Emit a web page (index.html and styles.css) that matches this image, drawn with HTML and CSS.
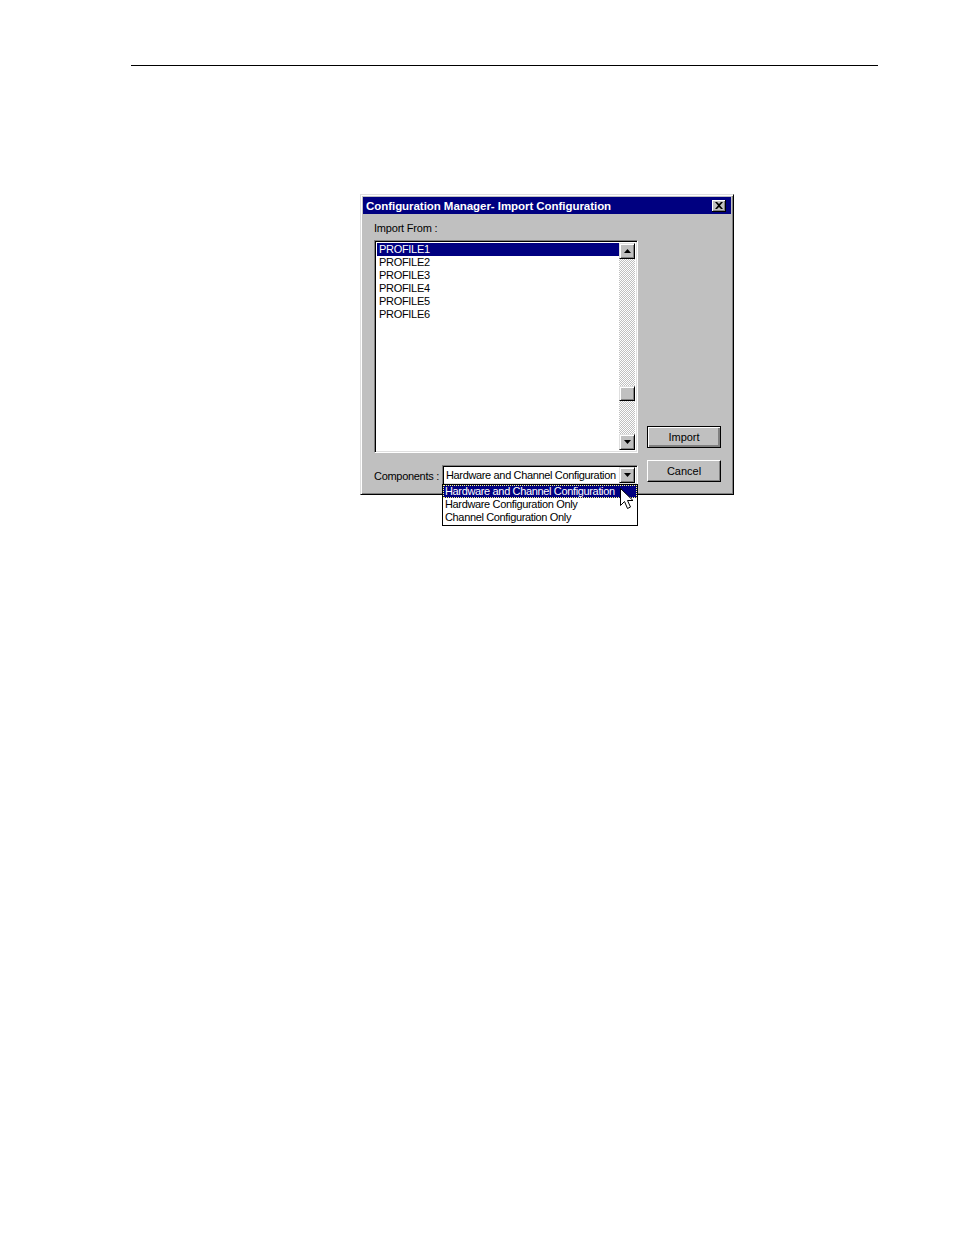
FILE: index.html
```html
<!DOCTYPE html>
<html>
<head>
<meta charset="utf-8">
<link rel="stylesheet" href="styles.css">
</head>
<body>
<div class="page">
  <div class="rule"></div>
  <div class="dialog">
    <div class="titlebar">
      <span class="title">Configuration Manager- Import Configuration</span>
      <span class="close"><svg width="8" height="7" viewBox="0 0 8 7"><path d="M0 0h2l2 2 2-2h2L5 3.5 8 7H6L4 5 2 7H0l3-3.5z" fill="#000"/></svg></span>
    </div>
    <div class="body">
      <div class="label-import">Import From :</div>
      <div class="listbox">
        <div class="items">
          <div class="item sel">PROFILE1</div>
          <div class="item">PROFILE2</div>
          <div class="item">PROFILE3</div>
          <div class="item">PROFILE4</div>
          <div class="item">PROFILE5</div>
          <div class="item">PROFILE6</div>
        </div>
        <div class="vscroll">
          <div class="sbtn"><svg width="7" height="4" viewBox="0 0 7 4"><path d="M3.5 0L7 4H0z" fill="#000"/></svg></div>
          <div class="track track-top"></div>
          <div class="thumb"></div>
          <div class="track track-bot"></div>
          <div class="sbtn"><svg width="7" height="4" viewBox="0 0 7 4"><path d="M0 0h7L3.5 4z" fill="#000"/></svg></div>
        </div>
      </div>
      <div class="btn default btn-import"><span>Import</span></div>
      <div class="comp-row">
        <span class="comp-label">Components :</span>
        <div class="combo">
          <span class="combo-text">Hardware and Channel Configuration</span>
          <div class="sbtn combo-btn"><svg width="7" height="4" viewBox="0 0 7 4"><path d="M0 0h7L3.5 4z" fill="#000"/></svg></div>
          <div class="droplist">
            <div class="ditem dsel">Hardware and Channel Configuration</div>
            <div class="ditem">Hardware Configuration Only</div>
            <div class="ditem">Channel Configuration Only</div>
            <svg class="cursor" width="14" height="24" viewBox="0 0 14 24"><path d="M0.5 0.5v17l4-4 3 7 3-1.5-3-6.5h5.5z" fill="#fff" stroke="#000" stroke-width="1"/></svg>
          </div>
        </div>
      </div>
      <div class="btn btn-cancel"><span>Cancel</span></div>
    </div>
  </div>
</div>
</body>
</html>
```

FILE: styles.css
```css
html, body {
  margin: 0;
  padding: 0;
  background: #fff;
}
.page {
  display: flex;
  flex-direction: column;
  width: 954px;
  height: 1235px;
  font-family: "Liberation Sans", Arial, sans-serif;
}
.rule {
  margin: 65px 0 0 131px;
  width: 747px;
  height: 1px;
  background: #000;
}
.dialog {
  margin: 128px 0 0 360px;
  width: 374px;
  height: 301px;
  box-sizing: border-box;
  background: #c0c0c0;
  border-top: 1px solid #dfdfdf;
  border-left: 1px solid #dfdfdf;
  border-right: 1px solid #000;
  border-bottom: 1px solid #000;
  box-shadow: inset 1px 1px 0 #fff, inset -1px -1px 0 #808080;
  padding: 2px 2px 0 2px;
  display: flex;
  flex-direction: column;
}
.titlebar {
  height: 18px;
  background: #000080;
  display: flex;
  align-items: center;
  justify-content: space-between;
  padding: 0 3px 0 3px;
}
.title {
  color: #fff;
  font-weight: bold;
  font-size: 11.5px;
  letter-spacing: -0.05px;
}
.close {
  width: 14px;
  height: 12px;
  box-sizing: border-box;
  background: #c0c0c0;
  border-right: 1px solid #000;
  border-bottom: 1px solid #000;
  box-shadow: inset 1px 1px 0 #fff, inset -1px -1px 0 #808080;
  display: flex;
  align-items: center;
  justify-content: center;
  margin-right: 2px;
}
.body {
  display: grid;
  grid-template-columns: 264px 74px;
  grid-template-rows: 26px 213px 41px;
  column-gap: 9px;
  padding-left: 11px;
}
.label-import {
  grid-column: 1 / 3;
  font-size: 11px;
  color: #000;
  padding-top: 8px;
  line-height: 13px;
  letter-spacing: -0.2px;
}
.listbox {
  grid-column: 1;
  grid-row: 2;
  box-sizing: border-box;
  border-top: 1px solid #808080;
  border-left: 1px solid #808080;
  border-right: 1px solid #fff;
  border-bottom: 1px solid #fff;
  box-shadow: inset 1px 1px 0 #000, inset -1px -1px 0 #dfdfdf;
  background: #fff;
  padding: 2px;
  display: flex;
}
.items {
  flex: 1;
  display: flex;
  flex-direction: column;
}
.item {
  height: 13px;
  line-height: 13px;
  font-size: 11px;
  padding-left: 2px;
  color: #000;
  letter-spacing: -0.3px;
}
.item.sel {
  background: #000080;
  color: #fff;
}
.vscroll {
  width: 16px;
  display: flex;
  flex-direction: column;
  background-color: #fff;
  background-image: conic-gradient(#c0c0c0 25%, #fff 0 50%, #c0c0c0 0 75%, #fff 0);
  background-size: 2px 2px;
}
.sbtn {
  width: 16px;
  height: 16px;
  flex: none;
  box-sizing: border-box;
  background: #c0c0c0;
  border-top: 1px solid #dfdfdf;
  border-left: 1px solid #dfdfdf;
  border-right: 1px solid #000;
  border-bottom: 1px solid #000;
  box-shadow: inset 1px 1px 0 #fff, inset -1px -1px 0 #808080;
  display: flex;
  align-items: center;
  justify-content: center;
}
.track-top {
  height: 127px;
}
.thumb {
  height: 15px;
  box-sizing: border-box;
  background: #c0c0c0;
  border-top: 1px solid #dfdfdf;
  border-left: 1px solid #dfdfdf;
  border-right: 1px solid #000;
  border-bottom: 1px solid #000;
  box-shadow: inset 1px 1px 0 #fff, inset -1px -1px 0 #808080;
}
.track-bot {
  flex: 1;
}
.btn {
  width: 74px;
  height: 22px;
  box-sizing: border-box;
  background: #c0c0c0;
  border-top: 1px solid #fff;
  border-left: 1px solid #fff;
  border-right: 1px solid #000;
  border-bottom: 1px solid #000;
  box-shadow: inset -1px -1px 0 #808080;
  display: flex;
  align-items: center;
  justify-content: center;
  font-size: 11px;
  color: #000;
}
.btn.default {
  border: 1px solid #000;
  box-shadow: inset 1px 1px 0 #fff, inset -1px -1px 0 #808080, inset -2px -2px 0 #808080;
}
.btn-import {
  grid-column: 2;
  grid-row: 2;
  align-self: end;
  margin-bottom: 5px;
}
.btn-cancel {
  grid-column: 2;
  grid-row: 3;
  margin-top: 7px;
}
.comp-row {
  grid-column: 1;
  grid-row: 3;
  display: flex;
  align-items: flex-start;
  padding-top: 12px;
}
.comp-label {
  font-size: 11px;
  width: 68px;
  flex: none;
  white-space: nowrap;
  padding-top: 5px;
  color: #000;
  letter-spacing: -0.3px;
}
.combo {
  position: relative;
  width: 196px;
  height: 20px;
  box-sizing: border-box;
  border-top: 1px solid #808080;
  border-left: 1px solid #808080;
  border-right: 1px solid #fff;
  border-bottom: 1px solid #fff;
  box-shadow: inset 1px 1px 0 #000, inset -1px -1px 0 #dfdfdf;
  background: #fff;
  padding: 2px;
  display: flex;
  align-items: center;
}
.combo-text {
  flex: 1;
  font-size: 11px;
  padding-left: 1px;
  color: #000;
  letter-spacing: -0.35px;
  white-space: nowrap;
}
.combo-btn {
  width: 16px;
  height: 16px;
}
.droplist {
  position: absolute;
  left: -1px;
  top: 18px;
  width: 196px;
  box-sizing: border-box;
  border: 1px solid #000;
  background: #fff;
  padding: 0 0 1px 0;
}
.ditem {
  height: 13px;
  line-height: 13px;
  font-size: 11px;
  padding-left: 2px;
  color: #000;
  letter-spacing: -0.35px;
  white-space: nowrap;
}
.ditem.dsel {
  background: #000080;
  color: #fff;
  outline: 1px dotted #ffff80;
  outline-offset: -1px;
}
.cursor {
  position: absolute;
  left: 177px;
  top: 3px;
}
```
